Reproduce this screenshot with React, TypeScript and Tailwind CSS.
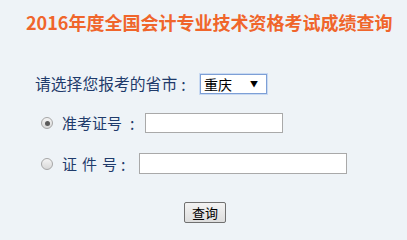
import React from "react";

function Radio({ checked }: { checked?: boolean }) {
  return (
    <span className="flex items-center justify-center w-[12px] h-[12px] rounded-full border border-[#a6a6a6] bg-gradient-to-b from-[#f4f4f4] to-[#d8d8d8] shrink-0">
      {checked && <span className="w-[5px] h-[5px] rounded-full bg-[#5a5a5a]" />}
    </span>
  );
}

export default function App() {
  return (
    <div className="w-[407px] h-[240px] bg-[#eef3f7] overflow-hidden font-['Noto_Sans_CJK_SC','Noto_Sans',sans-serif]">
      <h1 className="pt-[10px] pl-[26px] text-[18px] leading-[24px] font-bold text-[#f0652b] whitespace-nowrap">
        2016年度全国会计专业技术资格考试成绩查询
      </h1>

      <div className="flex items-center h-[20px] mt-[40px] pl-[35px]">
        <span className="flex w-[165px] text-[15.8px] leading-[20px] text-[#1f3b6b] whitespace-nowrap">
          <span>请选择您报考的省市</span>
          <span className="ml-[4px] text-[16px]">:</span>
        </span>
        <div className="flex items-center justify-between w-[67px] h-[20px] bg-white border border-[#7d9fd6] shadow-[0_0_0_1px_#c9daf2] pl-[3px] pr-[8px]">
          <span className="text-[14px] leading-[16px] text-black">重庆</span>
          <span className="text-[8px] leading-[8px] text-black">▼</span>
        </div>
      </div>

      <div className="flex items-center h-[20px] mt-[19px] pl-[41px]">
        <Radio checked />
        <span className="flex ml-[9px] w-[83px] text-[15px] leading-[20px] text-[#1f3b6b] whitespace-nowrap">
          <span>准考证号</span>
          <span className="ml-[8px] text-[16px]">:</span>
        </span>
        <div className="w-[138px] h-[20px] bg-white border border-[#a9a9a9]" />
      </div>

      <div className="flex items-center h-[21px] mt-[20px] pl-[41px]">
        <Radio />
        <span className="ml-[9px] w-[77px] text-[15px] leading-[20px] text-[#1f3b6b] whitespace-nowrap flex">
          <span className="mr-[5px]">证</span>
          <span className="mr-[5px]">件</span>
          <span>号</span>
          <span className="ml-[4px] text-[16px]">:</span>
        </span>
        <div className="w-[208px] h-[21px] bg-white border border-[#a9a9a9]" />
      </div>

      <div className="flex mt-[28px] pl-[184px]">
        <button className="w-[42px] h-[21px] flex items-center justify-center rounded-[2px] border border-[#707070] bg-gradient-to-b from-[#f3f3f3] to-[#dddddd] text-[13px] leading-[16px] text-black">
          查询
        </button>
      </div>
    </div>
  );
}
